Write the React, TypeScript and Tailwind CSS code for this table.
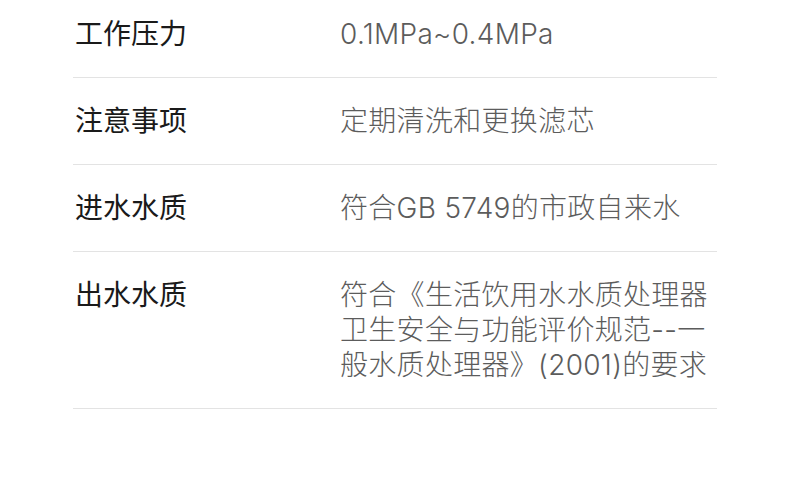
import React from 'react'

interface SpecRow {
  label: string
  value: string
}

const rows: SpecRow[] = [
  { label: '工作压力', value: '0.1MPa~0.4MPa' },
  { label: '注意事项', value: '定期清洗和更换滤芯' },
  { label: '进水水质', value: '符合GB 5749的市政自来水' },
  { label: '出水水质', value: '符合《生活饮用水水质处理器卫生安全与功能评价规范--一般水质处理器》(2001)的要求' },
]

function App() {
  return (
    <div
      className="min-h-screen w-full overflow-hidden bg-white"
      style={{ fontFamily: 'Inter, "Noto Sans CJK SC", "Noto Sans", sans-serif' }}
    >
      <div className="ml-[73px] -mt-[9px] w-[644px]">
        {rows.map((row, index) => (
          <div key={index} className="flex flex-row border-b border-[#e3e3e3] pt-[26px] pb-[25px]">
            <p className="w-[267px] shrink-0 pl-[2px] text-[28px] leading-[35px] text-[#1a1a1a]">{row.label}</p>
            <p className="flex-1 pr-[4px] text-[28px] leading-[35px] font-light tracking-[0.3px] break-all text-[#5c5c5c]">
              {row.value}
            </p>
          </div>
        ))}
      </div>
    </div>
  )
}

export default App
